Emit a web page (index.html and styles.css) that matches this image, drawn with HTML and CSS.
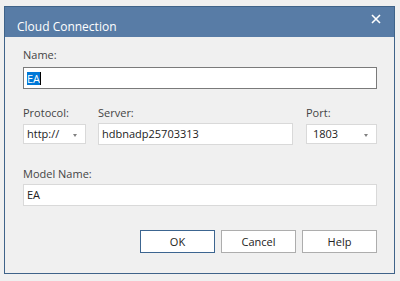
FILE: index.html
```html
<html>
<head>
<link rel="stylesheet" href="styles.css">
</head>
<body>
<div class="dialog">
  <div class="titlebar">
    <span class="title">Cloud Connection</span>
    <span class="close">
      <svg width="10" height="10" viewBox="0 0 10 10"><path d="M1 1 L9 9 M9 1 L1 9" stroke="#fff" stroke-width="1.6"/></svg>
    </span>
  </div>
  <div class="content">
    <div class="label">Name:</div>
    <div class="field name-field"><span class="selected">EA</span><span class="caret"></span></div>

    <div class="row">
      <div class="col protocol">
        <div class="label">Protocol:</div>
        <div class="combo">http://<span class="arrow"></span></div>
      </div>
      <div class="col server">
        <div class="label">Server:</div>
        <div class="field">hdbnadp25703313</div>
      </div>
      <div class="col port">
        <div class="label">Port:</div>
        <div class="combo port-combo">1803<span class="arrow"></span></div>
      </div>
    </div>

    <div class="label model-label">Model Name:</div>
    <div class="field model-field">EA</div>

    <div class="buttons">
      <div class="btn default">OK</div>
      <div class="btn">Cancel</div>
      <div class="btn">Help</div>
    </div>
  </div>
</div>
</body>
</html>
```

FILE: styles.css
```css
body{
  margin: 0;
  background: #f0f0f0;
  font-family: 'Open Sans', sans-serif;
  font-size: 11px;
}

.dialog{
  margin: 6px 0 0 4px;
  width: 389px;
  height: 266px;
  border: 1px solid #3f6389;
  background: #f0f0f0;
}

.titlebar{
  height: 30px;
  background: #587ca6;
  display: flex;
  align-items: center;
  justify-content: space-between;
  padding: 0 12px 0 12px;
}

.title{
  color: #fff;
  font-size: 12px;
  padding-top: 8px;
}

.close{
  display: flex;
  margin-top: -6px;
  margin-right: 1px;
}

.content{
  padding: 10px 17px 0 18px;
}

.label{
  color: #444;
  line-height: 16px;
  height: 16px;
}

.field{
  height: 20px;
  line-height: 20px;
  border: 1px solid #d9d9d9;
  background: #fff;
  padding: 0 3px;
  color: #222;
  margin-top: 2px;
}

.name-field{
  margin-top: 4px;
  border-color: #7a7a7a;
  display: flex;
  align-items: center;
}

.selected{
  background: #0078d7;
  color: #fff;
  line-height: 13px;
}

.caret{
  width: 1px;
  height: 13px;
  background: #000;
}

.row{
  display: flex;
  margin-top: 16px;
}

.col{
  display: flex;
  flex-direction: column;
}

.protocol{
  width: 63px;
  margin-right: 12px;
}

.server{
  width: 195px;
  margin-right: 13px;
}

.port{
  width: 71px;
}

.combo{
  position: relative;
  height: 18px;
  line-height: 18px;
  border: 1px solid #d9d9d9;
  background: #fff;
  padding: 0 3px;
  color: #222;
  margin-top: 3px;
}

.port-combo{
  padding-left: 6px;
}

.arrow{
  position: absolute;
  right: 8px;
  top: 9px;
  border-left: 2.5px solid transparent;
  border-right: 2.5px solid transparent;
  border-top: 3px solid #808080;
}

.model-label{
  margin-top: 21px;
}

.model-field{
  margin-top: 2px;
}

.buttons{
  display: flex;
  justify-content: flex-end;
  gap: 6px;
  margin-top: 24px;
}

.btn{
  width: 73px;
  height: 21px;
  line-height: 21px;
  border: 1px solid #adadad;
  background: #fff;
  text-align: center;
  color: #222;
}

.btn.default{
  border-color: #3c6590;
}
```
